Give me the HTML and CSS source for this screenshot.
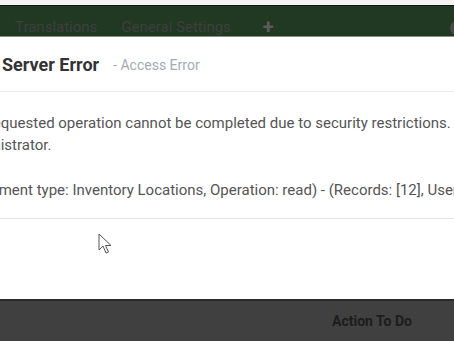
FILE: index.html
```html
<!DOCTYPE html>
<html lang="en">
<head>
  <meta charset="UTF-8">
  <title>Server Error</title>
  <link rel="stylesheet" href="styles.css">
</head>
<body>
  <!-- App navbar behind the backdrop -->
  <div class="top-strip"></div>
  <nav class="navbar">
    <span class="nav-item">Translations</span>
    <span class="nav-item">General Settings</span>
    <span class="nav-plus">+</span>
    <span class="nav-avatar"></span>
  </nav>

  <!-- Error dialog -->
  <div class="dialog">
    <div class="dialog-header">
      <h4 class="dialog-title">Server Error</h4>
      <span class="dialog-subtitle">- Access Error</span>
    </div>
    <div class="dialog-body">
      <p class="msg">The requested operation cannot be completed due to security restrictions. Please contact your system<br>administrator.</p>
      <p class="msg">(Document type: Inventory Locations, Operation: read) - (Records: [12], User: 2)</p>
    </div>
    <div class="dialog-footer"></div>
  </div>

  <div class="bottom-bar">
    <span class="bottom-label">Action To Do</span>
  </div>

  <!-- mouse pointer -->
  <svg class="cursor" width="16" height="24" viewBox="0 0 16 24">
    <path d="M1 1 L1 17 L5 13 L8 20 L10.5 19 L7.5 12.5 L13 12.5 Z" fill="#fff" stroke="#555" stroke-width="1"/>
  </svg>
</body>
</html>
```

FILE: styles.css
```css
* {
  box-sizing: border-box;
  margin: 0;
  padding: 0;
}
body {
  font-family: Roboto, "Noto Sans", sans-serif;
  background: #fff;
  width: 454px;
  height: 341px;
  overflow: hidden;
  position: relative;
}
.top-strip {
  height: 5px;
  background: #f4f4f4;
}
/* Navbar (dimmed by backdrop) */
.navbar {
  height: 32px;
  background: #213823;
  border-top: 1px solid #101a11;
  border-bottom: 1px solid #8a8f8b;
  display: flex;
  align-items: flex-end;
  padding: 0 0 0 15px;
  white-space: nowrap;
  position: relative;
  overflow: hidden;
}
.nav-item {
  color: #3d3f3d;
  font-size: 15px;
  margin-right: 24px;
  line-height: 17px;
}
.nav-plus {
  color: #5b5b5b;
  font-size: 20px;
  font-weight: bold;
  line-height: 17px;
  margin-left: 8px;
}
.nav-avatar {
  position: absolute;
  right: -10px;
  top: 15px;
  width: 14px;
  height: 14px;
  border-radius: 50%;
  background: #4a4a4a;
}
/* Dialog */
.dialog {
  height: 262px;
  background: #fff;
  display: flex;
  flex-direction: column;
  overflow: hidden;
}
.dialog-header {
  height: 55px;
  border-bottom: 1px solid #ececec;
  display: flex;
  align-items: center;
  padding: 0 0 0 2px;
  white-space: nowrap;
}
.dialog-title {
  font-size: 18px;
  font-weight: bold;
  color: #333;
  margin-right: 14px;
}
.dialog-subtitle {
  font-size: 14px;
  color: #a3abb3;
  margin-top: 2px;
}
.dialog-body {
  height: 127px;
  border-bottom: 1px solid #e6e6e6;
  padding-top: 20px;
  margin-left: -41px;
  white-space: nowrap;
}
.msg {
  font-size: 15px;
  line-height: 22px;
  color: #555;
  margin-bottom: 23px;
}
.dialog-footer {
  flex: 1;
}
/* Bottom bar */
.bottom-bar {
  height: 42px;
  background: #404040;
  border-top: 2px solid #2a2a2a;
  display: flex;
  align-items: center;
  padding-left: 332px;
}
.bottom-label {
  font-size: 14px;
  font-weight: bold;
  color: #1c1c1c;
}
.cursor {
  position: absolute;
  left: 98px;
  top: 233px;
}
```
